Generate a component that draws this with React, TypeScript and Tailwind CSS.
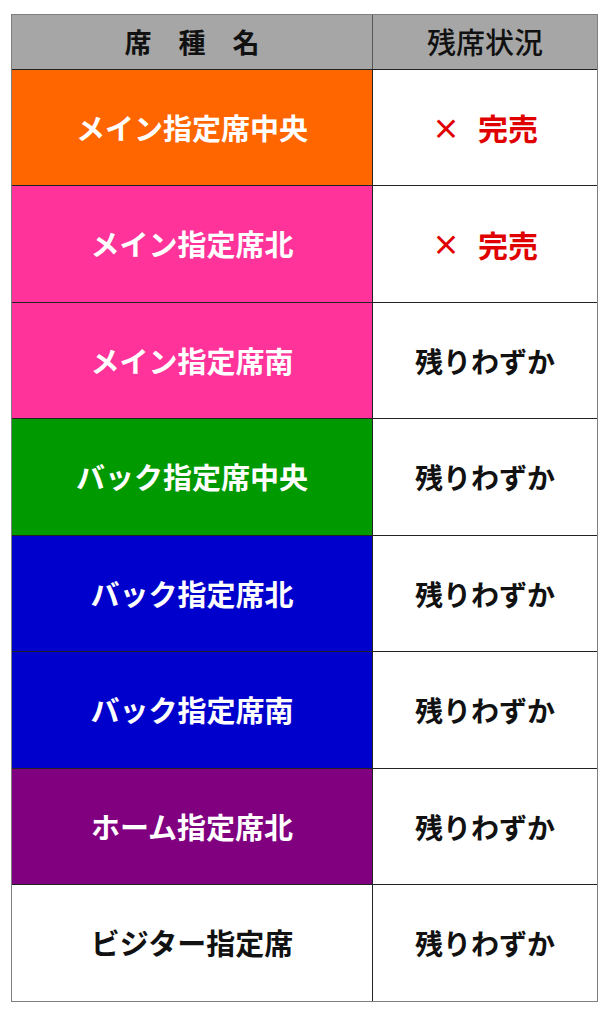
import React from "react";

type Row = { name: string; bg: string; text: string; h: string; status: "sold" | "few" };

const rows: Row[] = [
  { name: "メイン指定席中央", bg: "bg-[#ff6600]", text: "text-white", h: "h-[116px]", status: "sold" },
  { name: "メイン指定席北", bg: "bg-[#ff3399]", text: "text-white", h: "h-[117px]", status: "sold" },
  { name: "メイン指定席南", bg: "bg-[#ff3399]", text: "text-white", h: "h-[116px]", status: "few" },
  { name: "バック指定席中央", bg: "bg-[#009900]", text: "text-white", h: "h-[117px]", status: "few" },
  { name: "バック指定席北", bg: "bg-[#0000cc]", text: "text-white", h: "h-[116px]", status: "few" },
  { name: "バック指定席南", bg: "bg-[#0000cc]", text: "text-white", h: "h-[117px]", status: "few" },
  { name: "ホーム指定席北", bg: "bg-[#800080]", text: "text-white", h: "h-[116px]", status: "few" },
  { name: "ビジター指定席", bg: "bg-white", text: "text-[#111111]", h: "h-[116px]", status: "few" },
];

const font = { fontFamily: '"Noto Sans CJK JP", "Noto Sans", sans-serif' };

export default function App() {
  return (
    <div className="w-[605px] h-[1009px] bg-white pt-[14px] pl-[11px]" style={font}>
      <div className="w-[587px] border border-[#7f7f7f] bg-white">
        <div className="flex h-[55px] border-b border-[#222222] bg-[#a6a6a6]">
          <div className="w-[361px] border-r border-[#555555] flex items-center justify-center text-[27px] font-bold text-[#111111]">
            席　種　名
          </div>
          <div className="flex-1 flex items-center justify-center text-[29px] font-medium text-[#111111]">
            残席状況
          </div>
        </div>
        {rows.map((r, i) => (
          <div
            key={i}
            className={`flex ${r.h} ${i < rows.length - 1 ? "border-b border-[#222222]" : ""}`}
          >
            <div
              className={`w-[361px] border-r border-[#222222] flex items-center justify-center text-[29px] font-bold ${r.bg} ${r.text}`}
            >
              {r.name}
            </div>
            <div className="flex-1 flex items-center justify-center font-bold bg-white">
              {r.status === "sold" ? (
                <div className="flex items-center gap-[18px] text-[#e00000]">
                  <span className="text-[28px]">×</span>
                  <span className="text-[30px]">完売</span>
                </div>
              ) : (
                <span className="text-[28px] text-[#111111]">残りわずか</span>
              )}
            </div>
          </div>
        ))}
      </div>
    </div>
  );
}
